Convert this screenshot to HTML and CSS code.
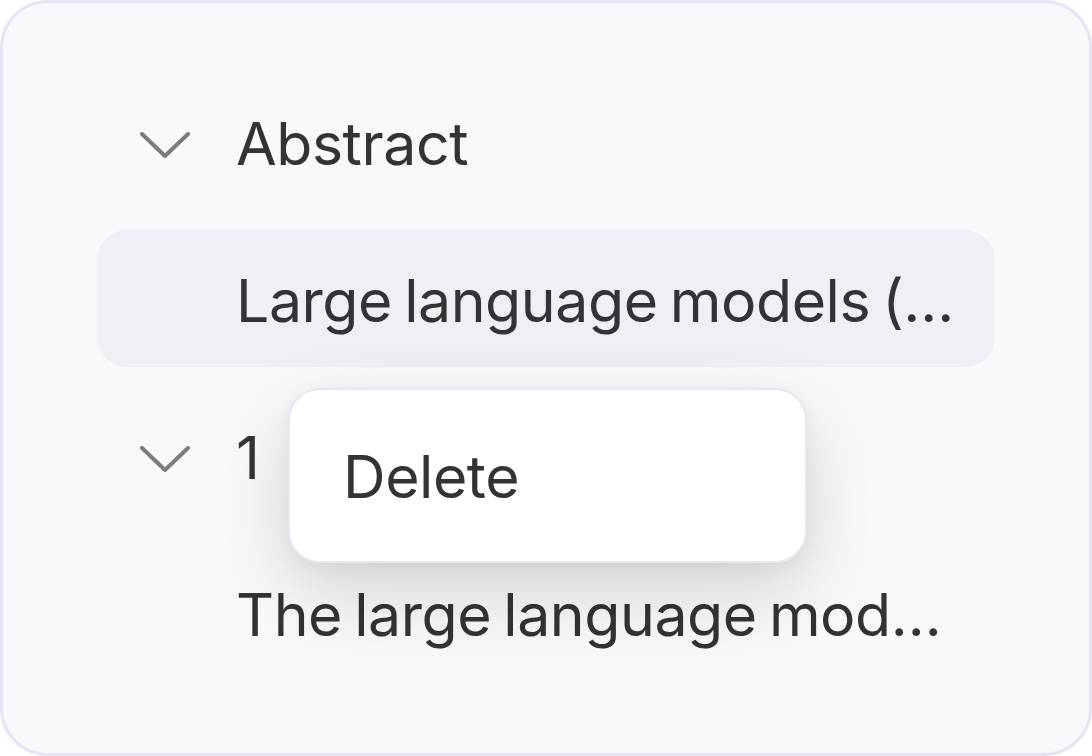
FILE: index.html
```html
<!DOCTYPE html>
<html lang="en">
<head>
<meta charset="utf-8">
<title>Outline</title>
<link rel="stylesheet" href="styles.css">
</head>
<body>
<div class="card">
  <ul class="outline">
    <li class="row">
      <svg class="chev" viewBox="0 0 50 26" aria-hidden="true"><path d="M2 2 L25 24 L48 2"/></svg>
      <span class="label">Abstract</span>
    </li>
    <li class="row selected">
      <span class="label">Large language models (…</span>
    </li>
    <li class="row">
      <svg class="chev" viewBox="0 0 50 26" aria-hidden="true"><path d="M2 2 L25 24 L48 2"/></svg>
      <span class="label">1</span>
    </li>
    <li class="row">
      <span class="label">The large language mod…</span>
    </li>
    <li class="menu">
      <div class="menu-item">Delete</div>
    </li>
  </ul>
</div>
</body>
</html>
```

FILE: styles.css
```css
html, body {
  margin: 0;
  padding: 0;
  background: #ffffff;
}
body {
  font-family: Inter, "Noto Sans", sans-serif;
  color: #333336;
}
.card {
  box-sizing: border-box;
  width: 1092px;
  height: 756px;
  border: 3px solid #e4e5f3;
  border-radius: 48px;
  background: #f9f9fc;
  padding: 70px 94px 0 94px;
  overflow: hidden;
}
.outline {
  position: relative;
  list-style: none;
  margin: 0;
  padding: 0;
  display: flex;
  flex-direction: column;
  gap: 20px;
}
.row {
  box-sizing: border-box;
  height: 137px;
  display: flex;
  align-items: center;
  padding: 4px 0 0 139px;
  border-radius: 30px;
  position: relative;
  white-space: nowrap;
  overflow: hidden;
}
.row.selected {
  background: #efeff6;
}
.chev {
  position: absolute;
  left: 43px;
  top: 59px;
  width: 50px;
  height: 26px;
  fill: none;
  stroke: #7b7b80;
  stroke-width: 4;
  stroke-linecap: round;
  stroke-linejoin: round;
}
.label {
  font-size: 59px;
  line-height: 72px;
  letter-spacing: -0.45px;
  word-spacing: -4px;
}
.menu {
  position: absolute;
  left: 191px;
  top: 315px;
  box-sizing: border-box;
  width: 519px;
  height: 175px;
  background: #ffffff;
  border: 2px solid #e6e7f0;
  border-radius: 32px;
  box-shadow: 0 30px 80px rgba(0, 0, 0, 0.15), 0 6px 18px rgba(0, 0, 0, 0.05);
  display: flex;
  align-items: center;
  padding: 3px 0 0 53px;
}
.menu-item {
  font-size: 59px;
  line-height: 72px;
  letter-spacing: -0.45px;
}
```
